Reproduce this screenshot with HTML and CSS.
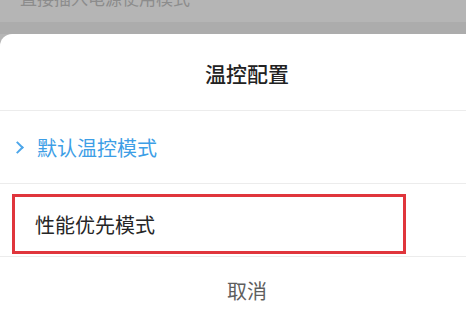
FILE: index.html
```
<!DOCTYPE html>
<html lang="zh-CN">

<head>
    <meta charset="UTF-8">
    <meta name="viewport" content="width=device-width, initial-scale=1.0">
    <title>温控配置</title>
    <link rel="stylesheet" href="styles.css">
</head>

<body>
    <div class="backdrop">
        <div class="backdrop-text">直接插入电源使用模式</div>
    </div>
    <div class="sheet">
        <div class="sheet-title">温控配置</div>
        <div class="option option-active">
            <span class="chevron"></span>
            <span>默认温控模式</span>
        </div>
        <div class="option">
            <div class="highlight">性能优先模式</div>
        </div>
        <div class="cancel">取消</div>
    </div>
</body>

</html>
```

FILE: styles.css
```
* {
    padding: 0;
    margin: 0;
    box-sizing: border-box;
}

body {
    width: 466px;
    height: 324px;
    overflow: hidden;
    background: #b5b5b5;
    font-family: "Noto Sans CJK SC", "Noto Sans", sans-serif;
}

.backdrop {
    height: 34px;
    background: linear-gradient(#b5b5b5 0, #b5b5b5 22px, #acacac 22px);
    overflow: hidden;
}

.backdrop-text {
    margin: -15px 0 0 20px;
    font-size: 17px;
    color: #8c8c8c;
}

.sheet {
    height: 290px;
    background: #fff;
    border-top-left-radius: 12px;
}

.sheet-title {
    height: 77px;
    display: flex;
    justify-content: center;
    align-items: center;
    padding: 1px 0 0 28px;
    font-size: 21px;
    font-weight: 500;
    color: #222;
    border-bottom: 1px solid #ececec;
}

.option {
    height: 73px;
    display: flex;
    align-items: center;
    padding-left: 35px;
    font-size: 20px;
    color: #262626;
    border-bottom: 1px solid #ececec;
}

.option-active {
    color: #3d9ee6;
    padding-left: 13px;
}

.chevron {
    width: 9px;
    height: 9px;
    border-top: 2px solid #4da6ea;
    border-right: 2px solid #4da6ea;
    transform: rotate(45deg);
    margin-right: 15px;
}

.highlight {
    width: 394px;
    height: 60px;
    margin: 8px 0 0 -23px;
    padding-left: 20px;
    display: flex;
    align-items: center;
    border: 3px solid #e0353c;
}

.cancel {
    height: 67px;
    display: flex;
    justify-content: center;
    align-items: center;
    padding-left: 28px;
    font-size: 20px;
    color: #5e5e5e;
}
```
